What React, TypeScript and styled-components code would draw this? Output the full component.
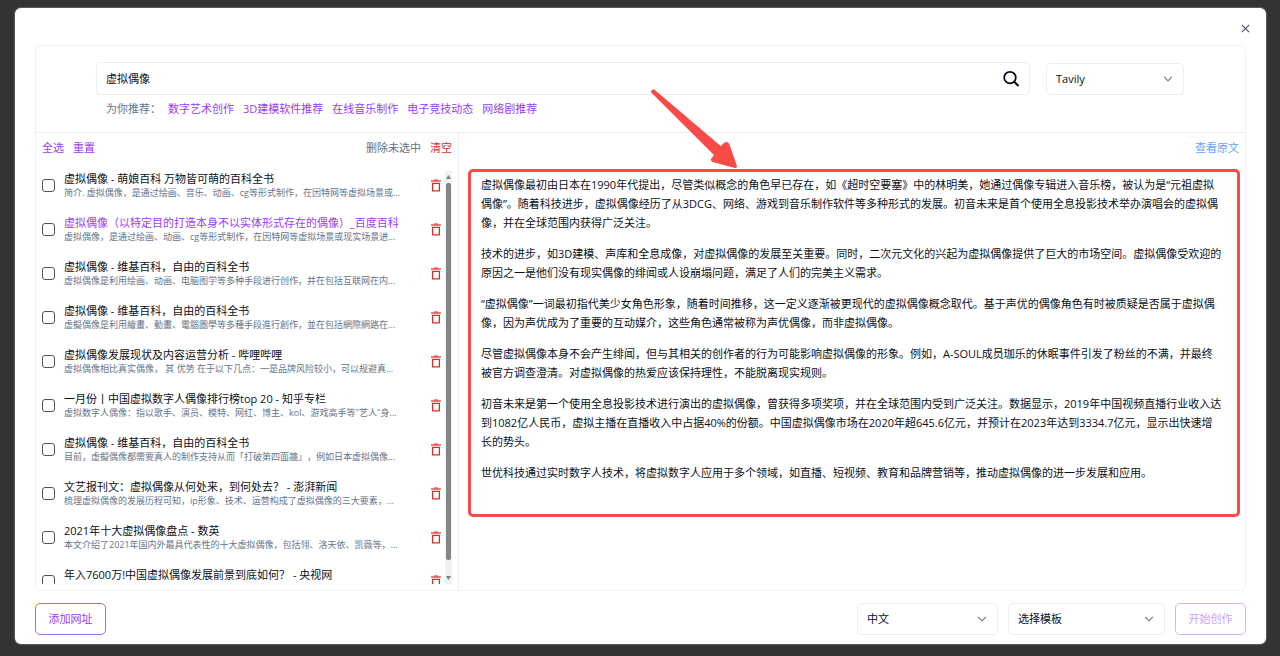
import React, { useState } from "react";
import styled, { createGlobalStyle } from "styled-components";

const Global = createGlobalStyle`
  *, *::before, *::after { box-sizing: border-box; }
  body {
    margin: 0;
    background: #333333;
    color: #0b1020;
    font: 11px/16px "Open Sans", "Noto Sans CJK SC", sans-serif;
    text-spacing-trim: space-all;
  }
  button, input, select { font: inherit; color: inherit; }
  button { cursor: pointer; }
  p, h3, ul { margin: 0; padding: 0; }
`;

const Backdrop = styled.div`
  display: flex;
  height: 100vh;
  min-height: 480px;
  padding: 8px 14px 12px 15px;
`;

const Dialog = styled.section`
  flex: 1;
  min-width: 0;
  display: flex;
  flex-direction: column;
  padding: 8px 20px 9px;
  background: #ffffff;
  border-radius: 6px;
  box-shadow: 0 0 1px 1px #94a3b866;
`;

const DialogTop = styled.header`
  display: flex;
  justify-content: flex-end;
  flex: 0 0 29px;
  align-items: flex-start;
`;

const IconButton = styled.button<{ $color?: string }>`
  display: flex;
  align-items: center;
  justify-content: center;
  padding: 0;
  border: 0;
  background: none;
  color: ${(p) => p.$color ?? "#0b1020"};
`;

const CloseButton = styled(IconButton)`
  width: 24px;
  height: 24px;
  margin-right: -11px;
`;

const Panel = styled.div`
  flex: 1;
  min-height: 0;
  display: flex;
  flex-direction: column;
  border: 1px solid #edf2f9;
  border-radius: 6px;
`;

const SearchArea = styled.div`
  flex: none;
  padding: 16px 61px 15px 60px;
  border-bottom: 1px solid #e8eef6;
`;

const SearchRow = styled.form`
  display: flex;
  align-items: center;
  gap: 16px;
`;

const SearchBox = styled.div`
  flex: 1;
  display: flex;
  align-items: center;
  height: 33px;
  padding: 0 9px;
  border: 1px solid #e8eef6;
  border-radius: 5px;
`;

const SearchInput = styled.input`
  flex: 1;
  min-width: 0;
  padding: 0;
  border: 0;
  outline: 0;
  background: none;
`;

const SelectWrap = styled.div<{ $width: number }>`
  display: grid;
  align-items: center;
  width: ${(p) => p.$width}px;
  height: 32px;

  > * { grid-area: 1 / 1; }
  > svg { justify-self: end; margin-right: 11px; pointer-events: none; }
`;

const Select = styled.select`
  appearance: none;
  width: 100%;
  height: 100%;
  padding: 0 28px 0 9px;
  border: 1px solid #e8eef6;
  border-radius: 5px;
  background: #ffffff;
`;

const Suggestions = styled.nav`
  display: flex;
  gap: 7px;
  padding: 6px 10px 0;
  color: #64748b;
`;

const SuggestionLinks = styled.div`
  display: flex;
  gap: 9px;
`;

const TextLink = styled.a<{ $color?: string }>`
  color: ${(p) => p.$color ?? "#9840f2"};
  text-decoration: none;
`;

const Columns = styled.div`
  flex: 1;
  min-height: 0;
  display: flex;
`;

const Sources = styled.div`
  flex: 0 0 423px;
  display: flex;
  flex-direction: column;
  padding: 0 6px 6px;
  border-right: 1px solid #e8eef6;
`;

const Toolbar = styled.div`
  flex: 0 0 38px;
  display: flex;
  align-items: flex-start;
  gap: 9px;
  padding-top: 7px;
`;

const TextButton = styled.button<{ $color: string }>`
  padding: 0;
  border: 0;
  background: none;
  color: ${(p) => p.$color};
`;

const Spacer = styled.span`
  flex: 1;
`;

const ListFrame = styled.div`
  flex: 1;
  min-height: 0;
  display: flex;
`;

const List = styled.ul`
  flex: 1;
  min-width: 0;
  overflow: hidden;
  list-style: none;
`;

const Item = styled.li`
  display: flex;
  align-items: center;
  height: 44px;
  padding: 0 4px 16px 0;
`;

const Check = styled.input`
  appearance: none;
  flex: none;
  width: 13px;
  height: 13px;
  margin: 0 9px 0 0;
  border: 1px solid #4b5563;
  border-radius: 3px;
  background: #ffffff;

  &:checked { background: #9840f2; border-color: #9840f2; }
`;

const ItemText = styled.label`
  flex: 1;
  min-width: 0;
  white-space: pre;
`;

const ItemTitle = styled.h3<{ $active?: boolean }>`
  font-size: 11px;
  line-height: 16px;
  font-weight: 400;
  color: ${(p) => (p.$active ? "#9840f2" : "#0b1020")};
`;

const ItemNote = styled.p`
  font-size: 9px;
  line-height: 12px;
  color: #64748b;
`;

const ScrollBar = styled.div`
  flex: 0 0 7px;
  display: flex;
  flex-direction: column;
  align-items: center;
  background: #f1f1f1;
`;

const ScrollArrow = styled.svg`
  flex: 0 0 12px;
  width: 7px;
`;

const ScrollTrack = styled.div`
  flex: 1;
  width: 5px;
`;

const ScrollThumb = styled.div`
  height: 97%;
  border-radius: 2px;
  background: #858585;
`;

const Reader = styled.div`
  flex: 1;
  min-width: 0;
  padding: 0 5px 0 9px;
`;

const ReaderBar = styled(Toolbar)`
  justify-content: flex-end;
  height: 36px;
  padding-right: 1px;
`;

const Article = styled.article`
  position: relative;
  display: flex;
  flex-direction: column;
  gap: 12px;
  padding: 3px 15px 32px 10px;
  border: 3px solid #f84b48;
  border-radius: 5px;
  line-height: 19px;
`;

const Pointer = styled.svg`
  position: absolute;
  left: 179px;
  top: -84px;
  pointer-events: none;
`;

const Footer = styled.footer`
  flex: none;
  display: flex;
  align-items: center;
  gap: 10px;
  padding-top: 12px;
`;

const OutlineButton = styled.button`
  width: 71px;
  height: 32px;
  padding: 0;
  border: 1px solid #a766f5;
  border-radius: 5px;
  background: #ffffff;
  color: #9840f2;

  &:disabled { opacity: 0.5; cursor: default; }
`;

const Chevron = () => (
  <svg width="10" height="10" viewBox="0 0 10 10" fill="none" stroke="#737780" strokeWidth="1.1">
    <path d="M1.2 3 5 6.8 8.8 3" />
  </svg>
);

const Trash = () => (
  <svg width="10" height="13" viewBox="0 0 10 13" fill="none" stroke="currentColor">
    <path d="M0 2h10" strokeWidth="1.2" />
    <path d="M3 1h4" strokeWidth="1" />
    <path d="M1.600 4.300h6.800v7.500h-6.800z" strokeWidth="1.300" />
  </svg>
);

type DropdownProps = { label: string; width: number; options: string[] };

const Dropdown = ({ label, width, options }: DropdownProps) => (
  <SelectWrap $width={width}>
    <Select aria-label={label}>
      {options.map((o) => (
        <option key={o}>{o}</option>
      ))}
    </Select>
    <Chevron />
  </SelectWrap>
);

const suggestions = ["数字艺术创作", "3D建模软件推荐", "在线音乐制作", "电子竞技动态", "网络剧推荐"];

const sources = [
  ["虚拟偶像 - 萌娘百科 万物皆可萌的百科全书", "简介. 虚拟偶像，是通过绘画、音乐、动画、cg等形式制作，在因特网等虚拟场景或..."],
  ["虚拟偶像（以特定目的打造本身不以实体形式存在的偶像）_百度百科", "虚拟偶像，是通过绘画、动画、cg等形式制作，在因特网等虚拟场景或现实场景进..."],
  ["虚拟偶像 - 维基百科，自由的百科全书", "虚拟偶像是利用绘画、动画、电脑图学等多种手段进行创作，并在包括互联网在内..."],
  ["虚拟偶像 - 维基百科，自由的百科全书", "虛擬偶像是利用繪畫、動畫、電腦圖學等多種手段進行創作，並在包括網際網路在..."],
  ["虚拟偶像发展现状及内容运营分析 - 哔哩哔哩", "虚拟偶像相比真实偶像， 其 优势 在于以下几点：一是品牌风险较小，可以规避真..."],
  ["一月份丨中国虚拟数字人偶像排行榜top 20 - 知乎专栏", "虚拟数字人偶像：指以歌手、演员、模特、网红、博主、kol、游戏高手等\"艺人\"身..."],
  ["虚拟偶像 - 维基百科，自由的百科全书", "目前，虛擬偶像都需要真人的制作支持从而「打破第四面牆」，例如日本虚拟偶像..."],
  ["文艺报刊文：虚拟偶像从何处来，到何处去？ - 澎湃新闻", "梳理虚拟偶像的发展历程可知，ip形象、技术、运营构成了虚拟偶像的三大要素，..."],
  ["2021年十大虚拟偶像盘点 - 数英", "本文介绍了2021年国内外最具代表性的十大虚拟偶像，包括翎、洛天依、凯薇等，..."],
  ["年入7600万!中国虚拟偶像发展前景到底如何？ - 央视网", ""],
];

const paragraphs = [
  "虚拟偶像最初由日本在1990年代提出，尽管类似概念的角色早已存在，如《超时空要塞》中的林明美，她通过偶像专辑进入音乐榜，被认为是“元祖虚拟偶像”。随着科技进步，虚拟偶像经历了从3DCG、网络、游戏到音乐制作软件等多种形式的发展。初音未来是首个使用全息投影技术举办演唱会的虚拟偶像，并在全球范围内获得广泛关注。",
  "技术的进步，如3D建模、声库和全息成像，对虚拟偶像的发展至关重要。同时，二次元文化的兴起为虚拟偶像提供了巨大的市场空间。虚拟偶像受欢迎的原因之一是他们没有现实偶像的绯闻或人设崩塌问题，满足了人们的完美主义需求。",
  "“虚拟偶像”一词最初指代美少女角色形象，随着时间推移，这一定义逐渐被更现代的虚拟偶像概念取代。基于声优的偶像角色有时被质疑是否属于虚拟偶像，因为声优成为了重要的互动媒介，这些角色通常被称为声优偶像，而非虚拟偶像。",
  "尽管虚拟偶像本身不会产生绯闻，但与其相关的创作者的行为可能影响虚拟偶像的形象。例如，A-SOUL成员珈乐的休眠事件引发了粉丝的不满，并最终被官方调查澄清。对虚拟偶像的热爱应该保持理性，不能脱离现实规则。",
  "初音未来是第一个使用全息投影技术进行演出的虚拟偶像，曾获得多项奖项，并在全球范围内受到广泛关注。数据显示，2019年中国视频直播行业收入达到1082亿人民币，虚拟主播在直播收入中占据40%的份额。中国虚拟偶像市场在2020年超645.6亿元，并预计在2023年达到3334.7亿元，显示出快速增长的势头。",
  "世优科技通过实时数字人技术，将虚拟数字人应用于多个领域，如直播、短视频、教育和品牌营销等，推动虚拟偶像的进一步发展和应用。",
];

export default function App() {
  const [query, setQuery] = useState("虚拟偶像");
  const [checked, setChecked] = useState<number[]>([]);
  const toggle = (i: number) =>
    setChecked((c) => (c.includes(i) ? c.filter((n) => n !== i) : [...c, i]));

  return (
    <>
      <Global />
      <Backdrop>
        <Dialog role="dialog" aria-label="素材搜索">
          <DialogTop>
            <CloseButton type="button" aria-label="关闭" $color="#4b5563">
              <svg width="9" height="9" viewBox="0 0 9 9" fill="none" stroke="currentColor" strokeWidth="1.2">
                <path d="M.8.8l7.4 7.4M8.2.8.8 8.2" />
              </svg>
            </CloseButton>
          </DialogTop>

          <Panel>
            <SearchArea>
              <SearchRow onSubmit={(e) => e.preventDefault()}>
                <SearchBox>
                  <SearchInput aria-label="搜索" value={query} onChange={(e) => setQuery(e.target.value)} />
                  <IconButton type="submit" aria-label="搜索">
                    <svg width="18" height="18" viewBox="0 0 18 18" fill="none" stroke="currentColor" strokeWidth="1.8">
                      <circle cx="8" cy="7.6" r="5.8" />
                      <path d="m12.300 11.800 4.200 4.200" strokeWidth="2.2" />
                    </svg>
                  </IconButton>
                </SearchBox>
                <Dropdown label="搜索引擎" width={138} options={["Tavily"]} />
              </SearchRow>
              <Suggestions>
                <span>为你推荐：</span>
                <SuggestionLinks>
                  {suggestions.map((s) => (
                    <TextLink key={s} href="#">{s}</TextLink>
                  ))}
                </SuggestionLinks>
              </Suggestions>
            </SearchArea>

            <Columns>
              <Sources>
                <Toolbar>
                  <TextButton type="button" $color="#9840f2" onClick={() => setChecked(sources.map((_, i) => i))}>全选</TextButton>
                  <TextButton type="button" $color="#9840f2" onClick={() => setChecked([])}>重置</TextButton>
                  <Spacer />
                  <TextButton type="button" $color="#64748b">删除未选中</TextButton>
                  <TextButton type="button" $color="#e02b2b">清空</TextButton>
                </Toolbar>
                <ListFrame>
                  <List>
                    {sources.map(([title, note], i) => (
                      <Item key={i}>
                        <Check id={`source-${i}`} type="checkbox" checked={checked.includes(i)} onChange={() => toggle(i)} />
                        <ItemText htmlFor={`source-${i}`}>
                          <ItemTitle $active={i === 1}>{title}</ItemTitle>
                          <ItemNote>{note || " "}</ItemNote>
                        </ItemText>
                        <IconButton type="button" aria-label="删除" $color="#e02b2b">
                          <Trash />
                        </IconButton>
                      </Item>
                    ))}
                  </List>
                  <ScrollBar aria-hidden="true">
                    <ScrollArrow viewBox="0 0 7 12"><path d="M.8 8h5.400L3.500 4z" fill="#858585" /></ScrollArrow>
                    <ScrollTrack><ScrollThumb /></ScrollTrack>
                    <ScrollArrow viewBox="0 0 7 12"><path d="M.8 4h5.400L3.500 8z" fill="#858585" /></ScrollArrow>
                  </ScrollBar>
                </ListFrame>
              </Sources>

              <Reader>
                <ReaderBar>
                  <TextLink href="#" $color="#60a5fa">查看原文</TextLink>
                </ReaderBar>
                <Article>
                  {paragraphs.map((p) => (
                    <p key={p}>{p}</p>
                  ))}
                  <Pointer width="90" height="82" viewBox="0 0 90 82" aria-hidden="true">
                    <path d="M1 4.200Q.5 3.200 2 2Q3.300 1 4.300 1.600L70.700 58L75 54.300Q78 53 79.300 56L87 78Q87 80.300 85 80L62.500 74Q60 72.500 61.500 70.300L64 67Z" fill="#f84b48" />
                  </Pointer>
                </Article>
              </Reader>
            </Columns>
          </Panel>

          <Footer>
            <OutlineButton type="button">添加网址</OutlineButton>
            <Spacer />
            <Dropdown label="语言" width={141} options={["中文"]} />
            <Dropdown label="模板" width={157} options={["选择模板"]} />
            <OutlineButton type="button" disabled>开始创作</OutlineButton>
          </Footer>
        </Dialog>
      </Backdrop>
    </>
  );
}
